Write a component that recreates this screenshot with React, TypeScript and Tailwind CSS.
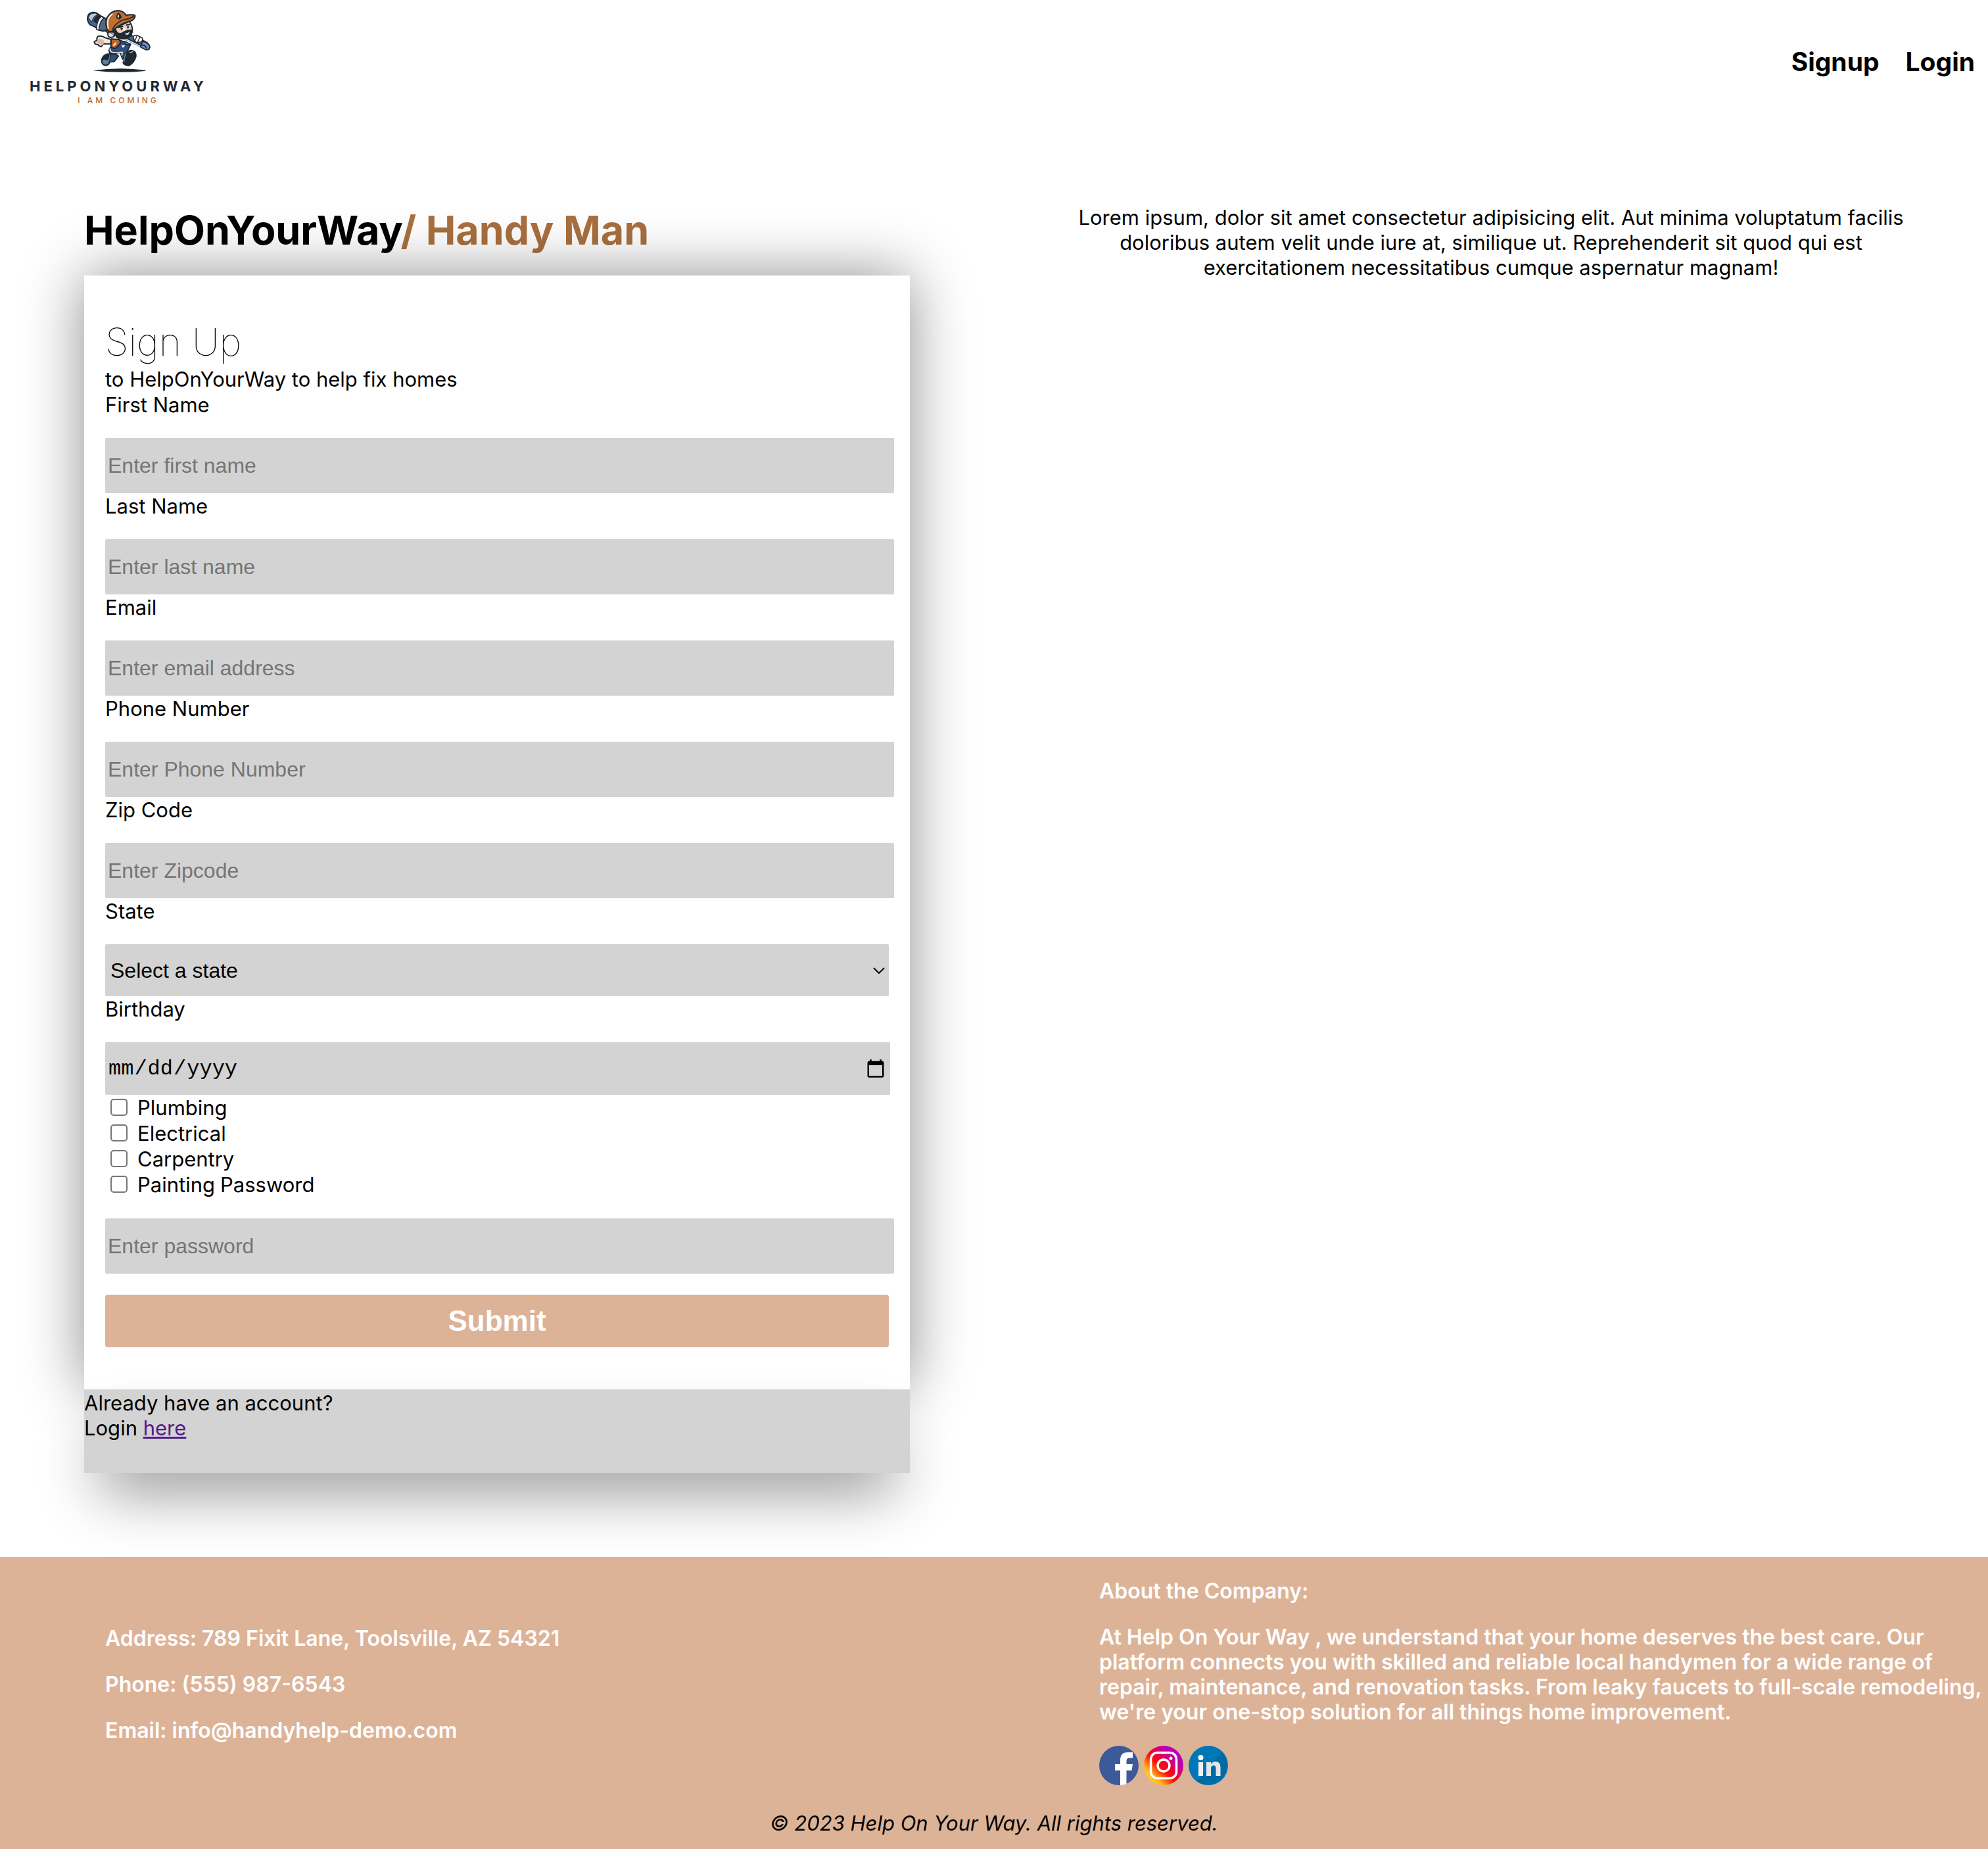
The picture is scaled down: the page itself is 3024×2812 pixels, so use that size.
import type { ReactNode } from "react";

function Logo() {
  return (
    <svg viewBox="0 0 1080 540" className="h-[180px] w-[360px]" role="img" aria-label="HelpOnYourWay, I am coming">
      <g stroke="#1f2933" strokeWidth="6" strokeLinejoin="round" strokeLinecap="round">
        {/* wrench behind the shoulder */}
        <path d="M462 118 L640 205 Q662 222 680 224 Q690 198 650 184 L500 118 Z" fill="#48688c" />
        <path d="M452 122 L506 158 L520 138 L470 104 Z" fill="#e9e4dc" />
        <path d="M404 66 Q418 52 438 58 L462 74 L484 86 L492 136 L470 142 L446 136 L436 124 L410 112 Q392 90 404 66 Z" fill="#48688c" />
        <path d="M404 78 Q412 58 436 60 L446 68 Q426 70 418 100 Z" fill="#b9cbdd" strokeWidth="3" />
        <path d="M446 70 L462 76 L456 90 L444 92 L440 106 L428 98 L432 82 Z" fill="#1f2933" strokeWidth="2" />
        <path d="M462 74 Q442 92 440 134 L452 138 Q452 102 474 82 Z" fill="#f1ece5" strokeWidth="4" />
        {/* back leg */}
        <path d="M500 246 Q472 246 464 272 Q462 298 484 298 Q498 296 500 282 L522 280 L540 256 L520 240 Z" fill="#5b82a8" />
        <path d="M498 248 Q470 250 465 276 Q480 266 490 276 Q500 262 498 248 Z" fill="#1f2933" strokeWidth="2" />
        <path d="M500 284 L506 248 L540 252 L522 280 Z" fill="#2f4f7f" strokeWidth="4" />
        {/* overalls and shirt */}
        <path d="M504 216 L548 184 L596 202 L580 236 L560 270 L548 240 L506 246 Q490 234 504 216 Z" fill="#2f4f7f" />
        <path d="M502 222 Q500 242 530 240 L558 238 L556 252" fill="none" stroke="#f1ece5" strokeWidth="5" />
        <path d="M508 178 L544 180 L550 196 L526 222 L506 216 Z" fill="#b9672a" />
        <path d="M514 208 L530 190 L528 202 L520 210 Z" fill="#f5efe8" stroke="none" />
        <path d="M570 188 L596 202 L572 204 Z" fill="#b9672a" strokeWidth="4" />
        <path d="M554 206 L572 208 L560 218 Z" fill="#ffffff" stroke="none" />
        {/* front boot */}
        <path d="M566 272 Q568 236 596 230 Q622 230 620 258 Q612 286 590 298 Q566 300 562 286 Z" fill="#1f2933" />
        <path d="M574 246 Q566 262 566 282" fill="none" stroke="#5b82a8" strokeWidth="5" />
        <path d="M592 240 L606 236" stroke="#fff" strokeWidth="3" />
        {/* swinging arm */}
        <path d="M506 180 L480 172 Q462 160 446 166 Q440 174 442 184 L430 190 Q430 204 448 204 Q452 214 464 212 L470 200 L506 200 Z" fill="#f6e7dc" />
        <path d="M446 180 Q460 172 474 186 Q480 196 466 206 Q446 200 440 192 Z" fill="#d8bba8" stroke="none" />
        {/* head */}
        <path d="M496 146 Q488 156 496 168 Q512 176 524 162 L520 146 Z" fill="#f3dccd" />
        <path d="M520 130 L590 98 Q606 118 604 142 Q596 170 570 176 L530 158 Z" fill="#ecd0bf" />
        <path d="M512 138 L526 128 L534 146 Q548 158 562 146 Q580 134 602 136 Q608 158 590 172 Q560 186 532 172 Q524 156 512 138 Z" fill="#1f2933" strokeWidth="3" />
        <path d="M568 154 Q580 152 592 144 Q590 158 580 160 Q572 160 568 154 Z" fill="#ffffff" strokeWidth="2" />
        <path d="M538 126 L560 120 M578 114 L592 112" strokeWidth="6" />
        <ellipse cx="555" cy="131" rx="4" ry="5" fill="#1f2933" strokeWidth="2" />
        <ellipse cx="584" cy="124" rx="3" ry="5" fill="#1f2933" strokeWidth="2" />
        <path d="M564 126 Q576 132 570 138 Q564 138 562 134" fill="#fff" stroke="none" />
        <path d="M504 154 Q514 150 518 160" fill="none" strokeWidth="3" />
        {/* cap */}
        <path d="M494 144 Q476 108 488 80 Q508 48 540 48 Q562 50 576 70 Q600 64 616 70 Q618 82 602 94 Q562 104 534 124 L508 144 Z" fill="#c06d2d" />
        <path d="M494 130 Q484 84 512 64" fill="none" stroke="#f7ece0" strokeWidth="6" />
        <path d="M514 132 Q536 94 574 88 Q598 84 612 72" fill="none" strokeWidth="5" />
        <path d="M532 82 Q530 66 540 58 Q554 68 554 80 L546 88 Z" fill="#1f2933" strokeWidth="2" />
        <path d="M540 66 Q546 74 540 82 Q534 76 540 66 Z" fill="#fff" stroke="none" />
        {/* gripping hand and wrench end */}
        <path d="M608 166 Q620 156 632 164 L650 174 Q654 188 640 192 L622 194 Q610 186 608 166 Z" fill="#ffffff" strokeWidth="5" />
        <path d="M624 166 L616 186 M638 170 L628 192" strokeWidth="4" fill="none" />
        <path d="M652 188 Q682 196 684 216 Q680 232 662 226 L640 214 Z" fill="#6d8fb3" strokeWidth="5" />
        <path d="M648 206 Q664 206 668 220" fill="none" strokeWidth="5" />
        <path d="M574 182 L636 212" stroke="#89a9c8" strokeWidth="4" />
      </g>
      <path d="M424 322 Q544 304 664 320 Q666 322 662 324 Q544 336 424 322 Z" fill="#1f2933" />
      <text x="135" y="418" fontFamily="Inter, sans-serif" fontWeight="700" fontSize="66" letterSpacing="15" fill="#1f2933">
        HELPONYOURWAY
      </text>
      <text x="355" y="472" fontFamily="Inter, sans-serif" fontWeight="500" fontSize="36" letterSpacing="12" fill="#b9672a">
        I AM COMING
      </text>
    </svg>
  );
}

const control =
  "h-[84px] w-[calc(100%+8px)] rounded-xs bg-[#d3d3d3] px-1 font-['Liberation_Sans',Arial,sans-serif] text-[32px] text-black placeholder:text-[#757575]";

function Field({ id, label, type = "text", placeholder }: { id: string; label: string; type?: string; placeholder: string }) {
  return (
    <div className="flex flex-col gap-[30px]">
      <label htmlFor={id} className="leading-10">
        {label}
      </label>
      <input id={id} type={type} placeholder={placeholder} className={control} />
    </div>
  );
}

function Trade({ name, children }: { name: string; children?: ReactNode }) {
  return (
    <div className="flex h-[39px] items-start leading-10">
      <label className="flex">
        <input
          type="checkbox"
          className="mt-1.5 mr-[15px] ml-2 size-[26px] appearance-none rounded-[5px] border-2 border-[#767676] bg-white checked:border-[#0075ff] checked:bg-[#0075ff]"
        />
        {name}
      </label>
      {children}
    </div>
  );
}

function Facebook() {
  return (
    <svg viewBox="0 0 60 60" className="size-[60px]" aria-hidden="true">
      <circle cx="30" cy="30" r="30" fill="#3d5a98" />
      <path d="M32 60 V37.500 H24 V28 H32 V22 Q32 10 43 10 H51 V18.500 H46 Q41.500 18.500 41.500 23 V28 H51 L49.500 37.500 H41.500 V58 Q37 60 32 60 Z" fill="#fff" />
    </svg>
  );
}

function Instagram() {
  return (
    <svg viewBox="0 0 60 60" className="size-[60px]" aria-hidden="true">
      <defs>
        <linearGradient id="ig" x1="0.1" y1="0.9" x2="0.9" y2="0.1">
          <stop offset="0" stopColor="#ffd92a" />
          <stop offset="0.18" stopColor="#fdb522" />
          <stop offset="0.42" stopColor="#ff0f00" />
          <stop offset="0.56" stopColor="#f0003a" />
          <stop offset="0.8" stopColor="#b900b4" />
          <stop offset="1" stopColor="#b900b4" />
        </linearGradient>
      </defs>
      <circle cx="30" cy="30" r="30" fill="url(#ig)" />
      <rect x="10.500" y="10.500" width="39" height="39" rx="10" fill="none" stroke="#fff" strokeWidth="3.500" />
      <circle cx="30" cy="30" r="9" fill="none" stroke="#fff" strokeWidth="3.500" />
      <circle cx="41" cy="19" r="2.500" fill="#fff" />
    </svg>
  );
}

function LinkedIn() {
  return (
    <svg viewBox="0 0 60 60" className="size-[60px]" aria-hidden="true">
      <circle cx="30" cy="30" r="30" fill="#0077b7" />
      <path d="M51 9 A30 30 0 0 1 12 54 Z" fill="#006aa3" />
      <circle cx="18.500" cy="18" r="4" fill="#fff" />
      <path d="M15 25 H22 V46 H15 Z" fill="#f2f2f2" />
      <path d="M27 25 H34 V28 Q37 24 41 24 Q48.500 24 48.500 33 V46 H41.500 V34.500 Q41.500 30 38 30 Q34 30 34 35 V46 H27 Z" fill="#e6e6e6" />
    </svg>
  );
}

export default function App() {
  return (
    <div className="bg-white font-[Inter,sans-serif] text-[31px] leading-[38px] text-black">
      <header className="flex h-[180px] items-center justify-between pr-5">
        <a href="#home">
          <Logo />
        </a>
        <nav className="flex gap-10 pt-2 text-[39px] leading-[48px] font-bold">
          <a href="#signup">Signup</a>
          <a href="#login">Login</a>
        </nav>
      </header>

      <main className="grid grid-cols-2 pt-[132px] pb-32">
        <section className="flex flex-col px-32">
          <h1 className="mb-[31px] text-[61px] leading-[76px] font-bold whitespace-nowrap">
            HelpOnYourWay<span className="text-[#a9703f]">/ Handy Man</span>
          </h1>
          <form className="flex flex-col bg-white px-8 py-16 shadow-[0_0_86px_rgba(0,0,0,0.45)]">
            <h2 className="text-[58px] leading-[75px] font-thin">Sign Up</h2>
            <p>to HelpOnYourWay to help fix homes</p>
            <Field id="first" label="First Name" placeholder="Enter first name" />
            <Field id="last" label="Last Name" placeholder="Enter last name" />
            <Field id="email" label="Email" type="email" placeholder="Enter email address" />
            <Field id="phone" label="Phone Number" type="tel" placeholder="Enter Phone Number" />
            <Field id="zip" label="Zip Code" placeholder="Enter Zipcode" />
            <label htmlFor="state" className="leading-10">
              State
            </label>
            <div className="relative mt-[30px]">
              <select
                id="state"
                className="block h-[79px] w-full appearance-none rounded-xs bg-[#d3d3d3] px-2 font-['Liberation_Sans',Arial,sans-serif] text-[32px]"
              >
                <option>Select a state</option>
                <option>Arizona</option>
                <option>California</option>
                <option>Texas</option>
              </select>
              <svg viewBox="0 0 18 10" className="pointer-events-none absolute top-[35px] right-1.5 h-2.5 w-[18px]" aria-hidden="true">
                <path d="M1 1 L9 9 L17 1" fill="none" stroke="#000" strokeWidth="2" />
              </svg>
            </div>
            <label htmlFor="birthday" className="leading-10">
              Birthday
            </label>
            <input
              id="birthday"
              type="date"
              className="mt-[30px] h-20 w-[calc(100%+2px)] rounded-xs bg-[#d3d3d3] px-1 pt-0.5 font-['Liberation_Mono',monospace] text-[32px]"
            />
            <Trade name="Plumbing" />
            <Trade name="Electrical" />
            <Trade name="Carpentry" />
            <Trade name="Painting">
              <label htmlFor="password" className="ml-2">
                Password
              </label>
            </Trade>
            <input id="password" type="password" placeholder="Enter password" className={control + " mt-8"} />
            <button
              type="submit"
              className="mt-8 h-20 w-full rounded-sm bg-[#ddb398] font-['Liberation_Sans',Arial,sans-serif] text-[44px] font-bold text-white"
            >
              Submit
            </button>
          </form>
          <div className="bg-[#d3d3d3] pt-0.5 pb-[49px] shadow-[0_50px_92px_-24px_rgba(0,0,0,0.46)]">
            <p>Already have an account?</p>
            <p>
              Login{" "}
              <a href="#login" className="text-[#551a8b] underline">
                here
              </a>
            </p>
          </div>
        </section>
        <section className="px-30 text-center">
          <p>
            Lorem ipsum, dolor sit amet consectetur adipisicing elit. Aut minima voluptatum facilis doloribus autem velit
            unde iure at, similique ut. Reprehenderit sit quod qui est exercitationem necessitatibus cumque aspernatur
            magnam!
          </p>
        </section>
      </main>

      <footer className="bg-[#ddb398] pt-[33px] pb-5">
        <div className="grid grid-cols-2 items-center text-[32px] font-semibold text-white">
          <address className="flex flex-col gap-8 pl-40 not-italic">
            <p>Address: 789 Fixit Lane, Toolsville, AZ 54321</p>
            <p>Phone: (555) 987-6543</p>
            <p>Email: info@handyhelp-demo.com</p>
          </address>
          <div className="flex flex-col gap-8 pb-2 pl-40">
            <p>About the Company:</p>
            <p>
              At Help On Your Way , we understand that your home deserves the best care. Our platform connects you with
              skilled and reliable local handymen for a wide range of repair, maintenance, and renovation tasks. From
              leaky faucets to full-scale remodeling, we're your one-stop solution for all things home improvement.
            </p>
            <div className="flex gap-2">
              <a href="#facebook" aria-label="Facebook">
                <Facebook />
              </a>
              <a href="#instagram" aria-label="Instagram">
                <Instagram />
              </a>
              <a href="#linkedin" aria-label="LinkedIn">
                <LinkedIn />
              </a>
            </div>
          </div>
        </div>
        <p className="mt-[31px] text-center italic">© 2023 Help On Your Way. All rights reserved.</p>
      </footer>
    </div>
  );
}
